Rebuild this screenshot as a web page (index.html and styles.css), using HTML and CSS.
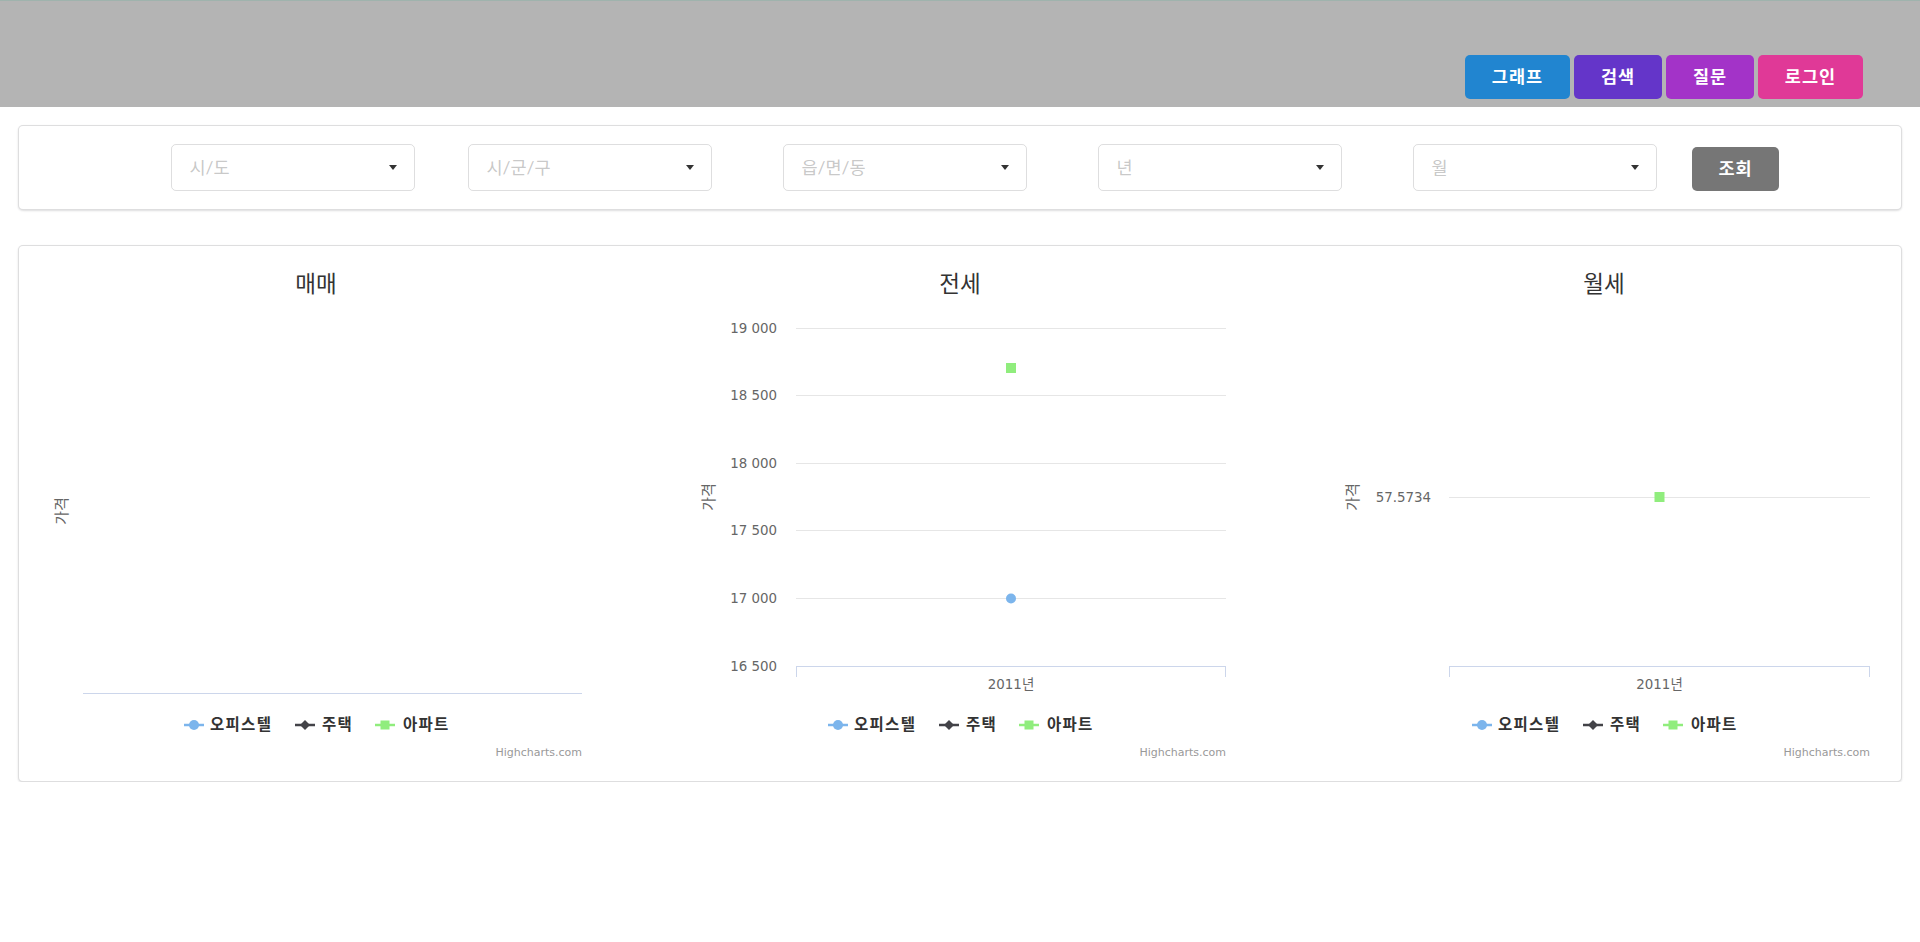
FILE: index.html
```html
<!DOCTYPE html>
<html lang="ko">
<head>
<meta charset="utf-8">
<title>부동산 시세</title>
<link rel="stylesheet" href="styles.css">
</head>
<body>
<header class="topbar">
  <nav class="menu">
    <a class="btn btn-blue">그래프</a>
    <a class="btn btn-violet">검색</a>
    <a class="btn btn-purple">질문</a>
    <a class="btn btn-pink">로그인</a>
  </nav>
</header>

<section class="segment search">
  <div class="dropdown first"><span class="placeholder">시/도</span><svg class="caret" width="8" height="5" viewBox="0 0 8 5"><path d="M0 0H8L4 5Z"/></svg></div>
  <div class="dropdown narrow"><span class="placeholder">시/군/구</span><svg class="caret" width="8" height="5" viewBox="0 0 8 5"><path d="M0 0H8L4 5Z"/></svg></div>
  <div class="dropdown"><span class="placeholder">읍/면/동</span><svg class="caret" width="8" height="5" viewBox="0 0 8 5"><path d="M0 0H8L4 5Z"/></svg></div>
  <div class="dropdown"><span class="placeholder">년</span><svg class="caret" width="8" height="5" viewBox="0 0 8 5"><path d="M0 0H8L4 5Z"/></svg></div>
  <div class="dropdown"><span class="placeholder">월</span><svg class="caret" width="8" height="5" viewBox="0 0 8 5"><path d="M0 0H8L4 5Z"/></svg></div>
  <button class="btn btn-grey query">조회</button>
</section>

<section class="segment charts">
  <!-- 매매 -->
  <svg class="chart" width="552" height="500" viewBox="0 0 552 500">
    <text class="c-title" x="276" y="31">매매</text>
    <text class="c-ytitle" transform="translate(22,250) rotate(-90)" dy="0.35em">가격</text>
    <path class="c-axis" d="M43 432.5H542"/>
    <g class="legend">
      <path d="M144 464H164" stroke="#7cb5ec"/><circle cx="154" cy="464" r="5" fill="#7cb5ec"/>
      <text x="170" y="469">오피스텔</text>
      <path d="M255 464H275" stroke="#434348"/><path d="M265 459L270 464L265 469L260 464Z" fill="#434348"/>
      <text x="282" y="469">주택</text>
      <path d="M335 464H355" stroke="#90ed7d"/><rect x="340.5" y="459.5" width="9" height="9" fill="#90ed7d"/>
      <text x="363" y="469">아파트</text>
    </g>
    <text class="c-credit" x="542" y="495">Highcharts.com</text>
  </svg>

  <!-- 전세 -->
  <svg class="chart" width="552" height="500" viewBox="0 0 552 500">
    <text class="c-title" x="276" y="31">전세</text>
    <path class="c-grid" d="M112 67.5H542M112 134.5H542M112 202.5H542M112 269.5H542M112 337.5H542"/>
    <text class="c-label" x="93" y="72">19 000</text>
    <text class="c-label" x="93" y="139">18 500</text>
    <text class="c-label" x="93" y="207">18 000</text>
    <text class="c-label" x="93" y="274">17 500</text>
    <text class="c-label" x="93" y="342">17 000</text>
    <text class="c-label" x="93" y="410">16 500</text>
    <text class="c-ytitle" transform="translate(24.5,236) rotate(-90)" dy="0.35em">가격</text>
    <path class="c-axis" d="M112 405.5H542M112.5 405V416M541.5 405V416"/>
    <text class="c-xlabel" x="327" y="428">2011년</text>
    <rect x="322" y="102" width="10" height="10" fill="#90ed7d"/>
    <circle cx="327" cy="337.5" r="5" fill="#7cb5ec"/>
    <g class="legend">
      <path d="M144 464H164" stroke="#7cb5ec"/><circle cx="154" cy="464" r="5" fill="#7cb5ec"/>
      <text x="170" y="469">오피스텔</text>
      <path d="M255 464H275" stroke="#434348"/><path d="M265 459L270 464L265 469L260 464Z" fill="#434348"/>
      <text x="282" y="469">주택</text>
      <path d="M335 464H355" stroke="#90ed7d"/><rect x="340.5" y="459.5" width="9" height="9" fill="#90ed7d"/>
      <text x="363" y="469">아파트</text>
    </g>
    <text class="c-credit" x="542" y="495">Highcharts.com</text>
  </svg>

  <!-- 월세 -->
  <svg class="chart" width="552" height="500" viewBox="0 0 552 500">
    <text class="c-title" x="276" y="31">월세</text>
    <path class="c-grid" d="M121 236.5H542"/>
    <text class="c-label" x="103" y="241">57.5734</text>
    <text class="c-ytitle" transform="translate(25,236) rotate(-90)" dy="0.35em">가격</text>
    <path class="c-axis" d="M121 405.5H542M121.5 405V416M541.5 405V416"/>
    <text class="c-xlabel" x="331.5" y="428">2011년</text>
    <rect x="326.5" y="231" width="10" height="10" fill="#90ed7d"/>
    <g class="legend">
      <path d="M144 464H164" stroke="#7cb5ec"/><circle cx="154" cy="464" r="5" fill="#7cb5ec"/>
      <text x="170" y="469">오피스텔</text>
      <path d="M255 464H275" stroke="#434348"/><path d="M265 459L270 464L265 469L260 464Z" fill="#434348"/>
      <text x="282" y="469">주택</text>
      <path d="M335 464H355" stroke="#90ed7d"/><rect x="340.5" y="459.5" width="9" height="9" fill="#90ed7d"/>
      <text x="363" y="469">아파트</text>
    </g>
    <text class="c-credit" x="542" y="495">Highcharts.com</text>
  </svg>
</section>
</body>
</html>
```

FILE: styles.css
```css
* { box-sizing: border-box; }

body {
  margin: 0;
  background: #ffffff;
  font-family: "Lato", "Noto Sans CJK KR", sans-serif;
  font-size: 17.5px;
  color: rgba(0, 0, 0, 0.87);
}

.topbar {
  height: 107px;
  background: #b4b4b4;
  border-top: 1px solid #9fb3ad;
  display: flex;
  justify-content: flex-end;
  padding: 54px 57px 0 0;
}

.menu {
  display: flex;
  gap: 4px;
  height: 44px;
}

.btn {
  display: flex;
  align-items: center;
  justify-content: center;
  height: 44px;
  padding: 0 26px;
  border: none;
  border-radius: 5px;
  color: #ffffff;
  font-family: "Lato", "Noto Sans CJK KR", sans-serif;
  font-size: 17.5px;
  font-weight: 700;
  letter-spacing: 1px;
  line-height: 1;
  cursor: pointer;
}

.btn-blue { background: #2185d0; width: 105px; }
.btn-violet { background: #6435c9; width: 88px; }
.btn-purple { background: #a333c8; width: 88px; }
.btn-pink { background: #e03997; width: 105px; }
.btn-grey { background: #767676; }

.segment {
  margin: 0 18px;
  background: #ffffff;
  border: 1px solid rgba(34, 36, 38, 0.15);
  border-radius: 5px;
  box-shadow: 0 1px 2px 0 rgba(34, 36, 38, 0.15);
}

.search {
  margin-top: 18px;
  height: 85px;
  display: flex;
  align-items: center;
  padding: 0 17.5px 0 151.5px;
}

.dropdown {
  width: 244px;
  height: 47.5px;
  margin-left: 71px;
  border: 1px solid rgba(34, 36, 38, 0.15);
  border-radius: 5px;
  display: flex;
  align-items: center;
  justify-content: space-between;
  padding: 0 17px 0 18px;
  flex: none;
}

.dropdown.first { margin-left: 0; }
.dropdown.narrow { margin-left: 53px; }

.placeholder {
  color: rgba(191, 191, 191, 0.87);
  font-size: 17.5px;
  line-height: 1;
}

.caret { fill: rgba(0, 0, 0, 0.8); display: block; }

.query {
  width: 87px;
  margin-left: 35.5px;
  margin-top: 2px;
  padding: 0;
  flex: none;
}

.charts {
  margin-top: 35px;
  height: 537px;
  display: flex;
  justify-content: space-between;
  padding: 15px 21px 19px 21px;
}

.chart {
  display: block;
  flex: none;
  overflow: visible;
}

.c-title {
  font-family: "Noto Sans CJK KR", sans-serif;
  font-size: 22.5px;
  fill: #333333;
  text-anchor: middle;
}

.c-ytitle {
  font-family: "Noto Sans CJK KR", sans-serif;
  font-size: 15px;
  fill: #666666;
  text-anchor: middle;
}

.c-label {
  font-family: "DejaVu Sans", "Noto Sans CJK KR", sans-serif;
  font-size: 13.4px;
  fill: #666666;
  text-anchor: end;
}

.c-xlabel {
  font-family: "DejaVu Sans", "Noto Sans CJK KR", sans-serif;
  font-size: 13.4px;
  fill: #666666;
  text-anchor: middle;
}

.c-grid {
  stroke: #e6e6e6;
  stroke-width: 1;
  fill: none;
}

.c-axis {
  stroke: #ccd6eb;
  stroke-width: 1;
  fill: none;
}

.legend path[stroke] { stroke-width: 2.5; fill: none; }

.legend text {
  font-family: "Noto Sans CJK KR", sans-serif;
  font-size: 15.5px;
  font-weight: 700;
  letter-spacing: 1.3px;
  fill: #333333;
}

.c-credit {
  font-family: "DejaVu Sans", sans-serif;
  font-size: 11px;
  fill: #999999;
  text-anchor: end;
}
```
